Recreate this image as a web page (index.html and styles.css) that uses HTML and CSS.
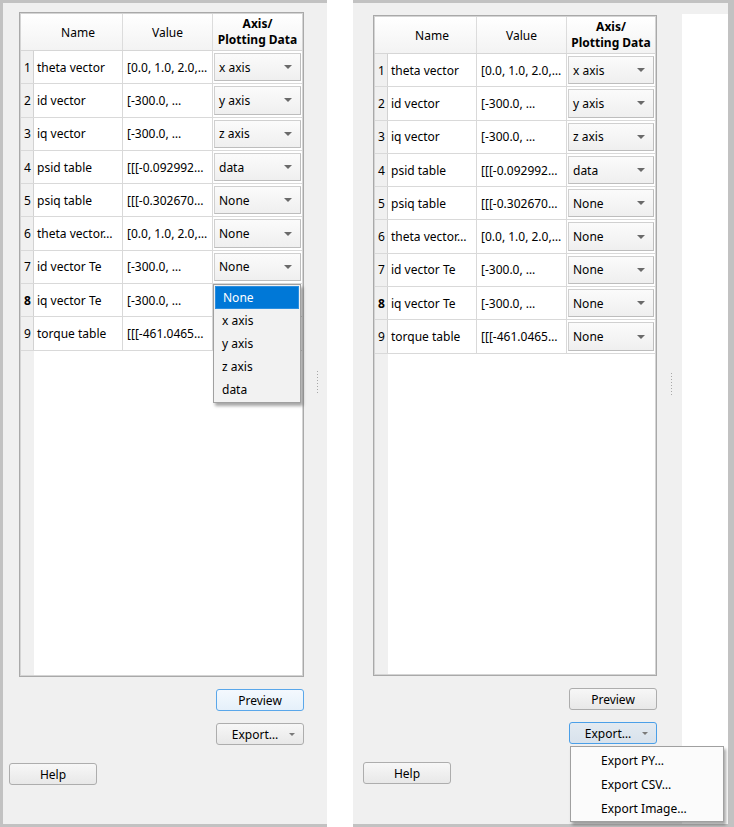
FILE: index.html
```html
<!DOCTYPE html>
<html>
<head>
<meta charset="utf-8">
<link rel="stylesheet" href="styles.css">
</head>
<body>
<div class="screen">
  <div class="win win-left">
    <div class="panel">
      <div class="content">
        <div class="tbl">
          <div class="thead">
            <div class="hc rn"></div>
            <div class="hc name">Name</div>
            <div class="hc value">Value</div>
            <div class="hc axis"><div class="hl">Axis/</div><div class="hl">Plotting Data</div></div>
          </div>
          <div class="trow"><div class="rn">1</div><div class="c name">theta vector</div><div class="c value">[0.0, 1.0, 2.0,…</div><div class="c axis"><div class="combo"><span>x axis</span><i class="arr"></i></div></div></div>
          <div class="trow"><div class="rn">2</div><div class="c name">id vector</div><div class="c value">[-300.0, …</div><div class="c axis"><div class="combo"><span>y axis</span><i class="arr"></i></div></div></div>
          <div class="trow"><div class="rn">3</div><div class="c name">iq vector</div><div class="c value">[-300.0, …</div><div class="c axis"><div class="combo"><span>z axis</span><i class="arr"></i></div></div></div>
          <div class="trow"><div class="rn">4</div><div class="c name">psid table</div><div class="c value">[[[-0.092992…</div><div class="c axis"><div class="combo"><span>data</span><i class="arr"></i></div></div></div>
          <div class="trow"><div class="rn">5</div><div class="c name">psiq table</div><div class="c value">[[[-0.302670…</div><div class="c axis"><div class="combo"><span>None</span><i class="arr"></i></div></div></div>
          <div class="trow"><div class="rn">6</div><div class="c name">theta vector…</div><div class="c value">[0.0, 1.0, 2.0,…</div><div class="c axis"><div class="combo"><span>None</span><i class="arr"></i></div></div></div>
          <div class="trow"><div class="rn">7</div><div class="c name">id vector Te</div><div class="c value">[-300.0, …</div><div class="c axis"><div class="combo"><span>None</span><i class="arr"></i></div></div></div>
          <div class="trow"><div class="rn cur">8</div><div class="c name">iq vector Te</div><div class="c value">[-300.0, …</div><div class="c axis"><div class="combo"></div></div></div>
          <div class="trow"><div class="rn">9</div><div class="c name">torque table</div><div class="c value">[[[-461.0465…</div><div class="c axis"><div class="combo"></div></div></div>
          <div class="filler"><div class="rn"></div></div>
        </div>
        <div class="btncol">
          <div class="btn focus">Preview</div>
          <div class="btn split"><span class="lbl">Export…</span><i class="arr"></i></div>
        </div>
      </div>
      <div class="btn help">Help</div>
      <div class="handle handle-left"></div>
      <div class="popup">
        <div class="pi sel">None</div>
        <div class="pi">x axis</div>
        <div class="pi">y axis</div>
        <div class="pi">z axis</div>
        <div class="pi">data</div>
      </div>
    </div>
  </div>
  <div class="gap"></div>
  <div class="win win-right">
    <div class="panel panel-right">
      <div class="content content-right">
        <div class="tbl tbl-right">
          <div class="thead">
            <div class="hc rn"></div>
            <div class="hc name">Name</div>
            <div class="hc value">Value</div>
            <div class="hc axis"><div class="hl">Axis/</div><div class="hl">Plotting Data</div></div>
          </div>
          <div class="trow"><div class="rn">1</div><div class="c name">theta vector</div><div class="c value">[0.0, 1.0, 2.0,…</div><div class="c axis"><div class="combo"><span>x axis</span><i class="arr"></i></div></div></div>
          <div class="trow"><div class="rn">2</div><div class="c name">id vector</div><div class="c value">[-300.0, …</div><div class="c axis"><div class="combo"><span>y axis</span><i class="arr"></i></div></div></div>
          <div class="trow"><div class="rn">3</div><div class="c name">iq vector</div><div class="c value">[-300.0, …</div><div class="c axis"><div class="combo"><span>z axis</span><i class="arr"></i></div></div></div>
          <div class="trow"><div class="rn">4</div><div class="c name">psid table</div><div class="c value">[[[-0.092992…</div><div class="c axis"><div class="combo"><span>data</span><i class="arr"></i></div></div></div>
          <div class="trow"><div class="rn">5</div><div class="c name">psiq table</div><div class="c value">[[[-0.302670…</div><div class="c axis"><div class="combo"><span>None</span><i class="arr"></i></div></div></div>
          <div class="trow"><div class="rn">6</div><div class="c name">theta vector…</div><div class="c value">[0.0, 1.0, 2.0,…</div><div class="c axis"><div class="combo"><span>None</span><i class="arr"></i></div></div></div>
          <div class="trow"><div class="rn">7</div><div class="c name">id vector Te</div><div class="c value">[-300.0, …</div><div class="c axis"><div class="combo"><span>None</span><i class="arr"></i></div></div></div>
          <div class="trow"><div class="rn cur">8</div><div class="c name">iq vector Te</div><div class="c value">[-300.0, …</div><div class="c axis"><div class="combo"><span>None</span><i class="arr"></i></div></div></div>
          <div class="trow"><div class="rn">9</div><div class="c name">torque table</div><div class="c value">[[[-461.0465…</div><div class="c axis"><div class="combo"><span>None</span><i class="arr"></i></div></div></div>
          <div class="filler"><div class="rn"></div></div>
        </div>
        <div class="btncol">
          <div class="btn">Preview</div>
          <div class="btn split pressed"><span class="lbl">Export…</span><i class="arr"></i></div>
        </div>
      </div>
      <div class="btn help help-right">Help</div>
      <div class="handle handle-right"></div>
    </div>
    <div class="side"></div>
    <div class="menu">
      <div class="mi">Export PY…</div>
      <div class="mi">Export CSV…</div>
      <div class="mi">Export Image…</div>
    </div>
  </div>
</div>
</body>
</html>
```
FILE: styles.css
```css
html, body {
  margin: 0;
  padding: 0;
  background: #ffffff;
}
body {
  font-family: "Noto Sans", "Open Sans", sans-serif;
  font-size: 12px;
  color: #000;
}
.screen {
  display: flex;
  width: 734px;
  height: 827px;
}
.win {
  box-sizing: border-box;
  height: 827px;
  background: #f0f0f0;
  border-top: 3px solid #c2c2c2;
  border-bottom: 3px solid #c2c2c2;
  position: relative;
}
.win-left {
  width: 327px;
  border-left: 3px solid #c2c2c2;
}
.gap {
  width: 26px;
}
.win-right {
  width: 381px;
  border-right: 6px solid #c2c2c2;
  display: flex;
}
.panel {
  position: relative;
  display: flex;
  flex-direction: column;
  width: 324px;
  height: 100%;
}
.panel-right {
  width: 329px;
}
.side {
  flex: 1;
  margin-top: 11px;
  background: #fff;
}
.content {
  margin-left: 16px;
  margin-top: 9px;
  width: 285px;
  display: flex;
  flex-direction: column;
}
.content-right {
  margin-left: 20px;
  margin-top: 12px;
  width: 284px;
}
.tbl {
  box-sizing: border-box;
  height: 665px;
  border: 1px solid #a9a9a9;
  box-shadow: inset 0 0 0 1px #d4d4d4;
  background: #fff;
  display: flex;
  flex-direction: column;
  padding: 1px;
}
.tbl-right {
  height: 661px;
}
.thead {
  display: flex;
  flex: none;
  height: 36px;
  background: linear-gradient(#ffffff, #f3f3f3);
  border-bottom: 1px solid #d6d6d6;
}
.hc {
  display: flex;
  align-items: center;
  justify-content: center;
  text-align: center;
  border-right: 1px solid #dcdcdc;
  box-sizing: border-box;
}
.hc.rn {
  border-right: 0;
  background: transparent;
}
.hc.axis {
  border-right: 0;
  flex-direction: column;
  font-weight: bold;
}
.hl {
  height: 16px;
  line-height: 16px;
  overflow: visible;
  white-space: nowrap;
}
.rn {
  width: 13px;
  flex: none;
  box-sizing: border-box;
}
.name { width: 89px; flex: none; }
.value { width: 90px; flex: none; }
.axis { flex: 1; }
.trow {
  display: flex;
  flex: none;
  height: 33.3px;
  box-sizing: border-box;
  border-bottom: 1px solid #d9d9d9;
}
.trow .rn {
  background: #f0f0f0;
  border-right: 1px solid #d2d2d2;
  display: flex;
  align-items: center;
  justify-content: center;
  padding-left: 1px;
}
.rn.cur {
  font-weight: bold;
}
.c {
  box-sizing: border-box;
  border-right: 1px solid #d9d9d9;
  display: flex;
  align-items: center;
  padding-left: 3px;
  white-space: nowrap;
  overflow: hidden;
}
.c.value {
  padding-left: 4px;
}
.c.axis {
  border-right: 0;
  padding: 2px 1px 2px 1px;
  align-items: stretch;
}
.combo {
  flex: 1;
  display: flex;
  align-items: center;
  justify-content: space-between;
  padding: 0 8px 0 4px;
  border: 1px solid #d0d0d0;
  border-right-color: #bdbdbd;
  border-bottom-color: #bdbdbd;
  background: linear-gradient(#fbfbfb, #efefef);
}
.arr {
  display: block;
  width: 0;
  height: 0;
  border-left: 4px solid transparent;
  border-right: 4px solid transparent;
  border-top: 4px solid #6a6a6a;
}
.filler {
  flex: 1;
  display: flex;
}
.filler .rn {
  background: #f0f0f0;
}
.btncol {
  display: flex;
  flex-direction: column;
  align-items: flex-end;
  gap: 12px;
  margin-top: 12px;
}
.btn {
  box-sizing: border-box;
  width: 88px;
  height: 22px;
  border: 1px solid #adadad;
  border-radius: 3px;
  background: linear-gradient(#f7f7f7, #e8e8e8);
  display: flex;
  align-items: center;
  justify-content: center;
}
.btn.focus {
  border-color: #5aa7ea;
  background: linear-gradient(#f4f9fe, #e5f0fa);
}
.btn.pressed {
  border-color: #4a9fe8;
  background: linear-gradient(#e3eaf1, #d8e2ec);
}
.btn.split {
  justify-content: flex-start;
}
.btn.split .lbl {
  flex: 1;
  text-align: center;
  padding-left: 4px;
}
.btn.split .arr {
  margin-right: 8px;
  border-left-width: 3px;
  border-right-width: 3px;
  border-top-width: 3px;
  border-top-color: #7a7a7a;
}
.help {
  margin-left: 6px;
  margin-top: 18px;
}
.help-right {
  margin-left: 10px;
}
.handle {
  position: absolute;
  width: 1px;
  height: 22px;
  background: repeating-linear-gradient(#a8a8a8 0 1px, transparent 1px 3px);
}
.handle-left {
  left: 314px;
  top: 368px;
}
.handle-right {
  left: 318px;
  top: 370px;
}
.popup {
  position: absolute;
  left: 210px;
  top: 281px;
  width: 88px;
  height: 119px;
  box-sizing: border-box;
  border: 1px solid #a0a0a0;
  background: #f2f2f2;
  box-shadow: 2px 3px 3px rgba(0, 0, 0, 0.35);
  padding: 1px;
  display: flex;
  flex-direction: column;
}
.pi {
  height: 23.4px;
  display: flex;
  align-items: center;
  padding-left: 7px;
}
.pi.sel {
  background: #0078d7;
  color: #fff;
  padding-left: 8px;
  box-shadow: inset 0 0 0 1px #2a8ee0;
}
.menu {
  position: absolute;
  left: 217px;
  top: 743px;
  width: 154px;
  height: 76px;
  box-sizing: border-box;
  border: 1px solid #a0a0a0;
  background: #fbfbfb;
  box-shadow: 2px 3px 3px rgba(0, 0, 0, 0.35);
  display: flex;
  flex-direction: column;
  padding-top: 1px;
}
.mi {
  height: 25.5px;
  display: flex;
  align-items: center;
  padding-left: 30px;
}
```
